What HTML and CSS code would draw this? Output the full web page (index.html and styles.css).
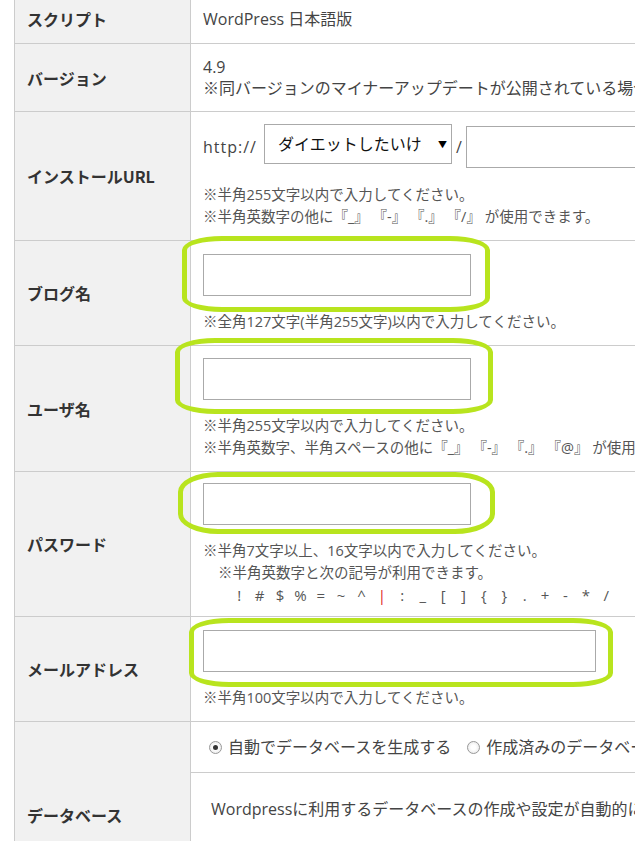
FILE: index.html
```html
<!DOCTYPE html>
<html lang="ja">
<head>
    <meta charset="UTF-8">
    <meta name="viewport" content="width=device-width, initial-scale=1.0">
    <title>WordPress インストール</title>
    <link rel="stylesheet" href="styles.css">
</head>
<body>
    <table class="spec">
        <colgroup>
            <col class="col-label">
            <col>
        </colgroup>
        <tr class="row-script">
            <th>スクリプト</th>
            <td>WordPress 日本語版</td>
        </tr>
        <tr class="row-version">
            <th>バージョン</th>
            <td>
                <div>4.9</div>
                <div>※同バージョンのマイナーアップデートが公開されている場合は、最新版がインストールされます。</div>
            </td>
        </tr>
        <tr class="row-url">
            <th>インストールURL</th>
            <td>
                <div class="url-line">
                    <span class="url-text url-scheme">http://</span>
                    <div class="select">
                        <span class="select-text">ダイエットしたいけど</span>
                        <span class="select-arrow">▼</span>
                    </div>
                    <span class="url-text">/</span>
                    <input type="text" class="text-input path-input">
                </div>
                <div class="notes url-notes">
                    <p>※半角255文字以内で入力してください。</p>
                    <p>※半角英数字の他に『_』 『-』 『.』 『/』 が使用できます。</p>
                </div>
            </td>
        </tr>
        <tr class="row-blog">
            <th>ブログ名</th>
            <td>
                <div class="field">
                    <input type="text" class="text-input">
                    <span class="mark mark-blog"></span>
                </div>
                <div class="notes">
                    <p>※全角127文字(半角255文字)以内で入力してください。</p>
                </div>
            </td>
        </tr>
        <tr class="row-user">
            <th>ユーザ名</th>
            <td>
                <div class="field">
                    <input type="text" class="text-input">
                    <span class="mark mark-user"></span>
                </div>
                <div class="notes">
                    <p>※半角255文字以内で入力してください。</p>
                    <p>※半角英数字、半角スペースの他に『_』 『-』 『.』 『@』 が使用できます。</p>
                </div>
            </td>
        </tr>
        <tr class="row-pass">
            <th>パスワード</th>
            <td>
                <div class="field">
                    <input type="password" class="text-input">
                    <span class="mark mark-pass"></span>
                </div>
                <div class="notes">
                    <p>※半角7文字以上、16文字以内で入力してください。</p>
                    <p class="indent">※半角英数字と次の記号が利用できます。</p>
                    <p class="symbols"><span>!</span><span>#</span><span>$</span><span>%</span><span>=</span><span>~</span><span>^</span><span class="red">|</span><span>:</span><span>_</span><span>[</span><span>]</span><span>{</span><span>}</span><span>.</span><span>+</span><span>-</span><span>*</span><span>/</span></p>
                </div>
            </td>
        </tr>
        <tr class="row-mail">
            <th>メールアドレス</th>
            <td>
                <div class="field">
                    <input type="email" class="text-input mail-input">
                    <span class="mark mark-mail"></span>
                </div>
                <div class="notes">
                    <p>※半角100文字以内で入力してください。</p>
                </div>
            </td>
        </tr>
        <tr class="row-db">
            <th rowspan="2">データベース</th>
            <td>
                <div class="radios">
                    <span class="radio checked"></span>
                    <span class="radio-label">自動でデータベースを生成する</span>
                    <span class="radio"></span>
                    <span class="radio-label">作成済みのデータベースを利用する</span>
                </div>
            </td>
        </tr>
        <tr class="row-db-desc">
            <td class="db-desc">Wordpressに利用するデータベースの作成や設定が自動的に行われます。</td>
        </tr>
    </table>
</body>
</html>
```

FILE: styles.css
```css
* {
    margin: 0;
    padding: 0;
    box-sizing: border-box;
}

body {
    background-color: #ffffff;
    color: #444444;
    font-family: 'Open Sans', 'Noto Sans CJK JP', sans-serif;
    overflow: hidden;
}

.spec {
    border-collapse: collapse;
    table-layout: fixed;
    width: 1000px;
    margin: -6px 0 0 14px;
}

.col-label {
    width: 176px;
}

.spec th,
.spec td {
    border: 1px solid #cccccc;
    vertical-align: middle;
}

.spec th {
    background-color: #f1f1f1;
    color: #333333;
    font-family: 'Noto Sans CJK JP', sans-serif;
    font-size: 16px;
    font-weight: 700;
    text-align: left;
    padding: 0 12px;
}

.spec td {
    font-size: 16px;
    line-height: 21px;
    padding: 0 12px;
    white-space: nowrap;
}

.row-script { height: 49px; }
.row-version { height: 68px; }
.row-url { height: 129px; }
.row-blog { height: 105px; }
.row-user { height: 126px; }
.row-pass { height: 145px; }
.row-mail { height: 105px; }
.row-db { height: 51px; }
.row-db-desc { height: 135px; }

/* inputs */

.text-input {
    display: block;
    width: 268px;
    height: 42px;
    border: 1px solid #aaaaaa;
    background-color: #ffffff;
    outline: none;
}

.mail-input {
    width: 393px;
}

.field {
    position: relative;
    width: max-content;
}

.notes {
    margin-top: 15px;
    font-size: 14.5px;
    line-height: 22px;
    color: #555555;
}

.indent {
    padding-left: 15px;
}

.symbols {
    display: flex;
    padding-left: 26px;
    font-size: 15px;
}

.symbols span {
    width: 20.4px;
    text-align: center;
}

.red {
    color: #e02020;
}

/* install url */

.url-line {
    display: flex;
    align-items: flex-start;
    gap: 4px;
}

.url-text {
    line-height: 46px;
    color: #444444;
}

.url-scheme {
    letter-spacing: 1px;
    margin-right: 3px;
}

.select {
    display: flex;
    align-items: center;
    width: 188px;
    height: 40px;
    padding-left: 13px;
    border: 1px solid #aaaaaa;
    background-color: #ffffff;
    color: #111111;
}

.select-text {
    width: 146px;
    overflow: hidden;
}

.select-arrow {
    margin-left: 14px;
    font-size: 9px;
    color: #000000;
}

.path-input {
    width: 200px;
    margin-top: 2px;
}

.url-notes {
    margin-top: 14px;
}

/* hand drawn highlights */

.mark {
    position: absolute;
    border: 5px solid #b8e41e;
    border-radius: 40px / 14px;
    z-index: 2;
}

.mark-blog {
    top: -18px;
    bottom: -16px;
    left: -21px;
    right: -19px;
}

.mark-user {
    top: -20px;
    bottom: -14px;
    left: -28px;
    right: -22px;
}

.mark-pass {
    top: -11px;
    bottom: -9px;
    left: -25px;
    right: -24px;
    border-radius: 40px / 20px;
}

.mark-mail {
    top: -12px;
    bottom: -15px;
    left: -14px;
    right: -17px;
}

/* database */

.radios {
    display: flex;
    align-items: center;
    padding-left: 6px;
    color: #444444;
}

.radio {
    width: 13px;
    height: 13px;
    border: 1px solid #999999;
    border-radius: 50%;
    background: radial-gradient(circle, #ffffff 30%, #e2e2e2 100%);
    display: flex;
    align-items: center;
    justify-content: center;
    margin-right: 6px;
}

.radio.checked::after {
    content: "";
    width: 5px;
    height: 5px;
    border-radius: 50%;
    background-color: #333333;
}

.radio-label {
    margin-right: 16px;
}

.spec td.db-desc {
    vertical-align: top;
    padding: 25px 12px 0 20px;
    line-height: 22px;
}
```
